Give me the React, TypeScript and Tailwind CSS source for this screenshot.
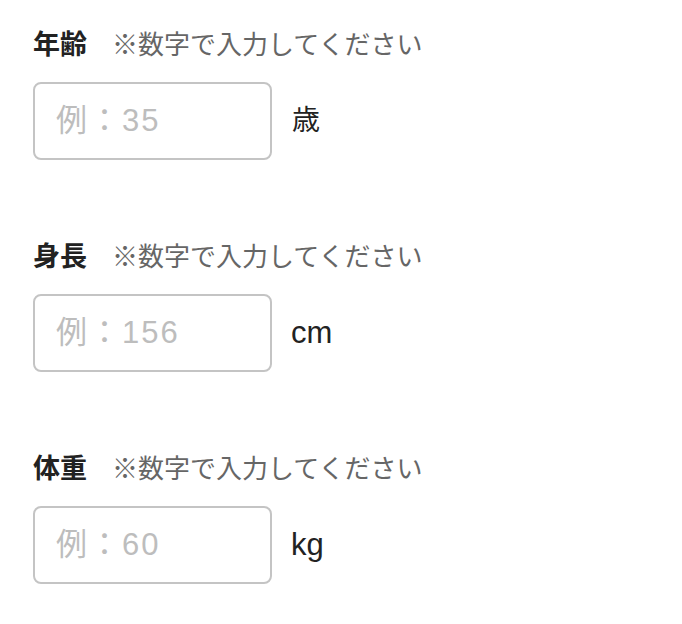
import React from "react";

const fields = [
  { label: "年齢", ph: "例：35", unit: "歳", unitCls: "ml-[20px] text-[28px] text-[#222]" },
  { label: "身長", ph: "例：156", unit: "cm", unitCls: "ml-[19px] text-[31px] text-[#222]" },
  { label: "体重", ph: "例：60", unit: "kg", unitCls: "ml-[19px] text-[31px] text-[#222]" },
];

export default function App() {
  return (
    <div
      className="w-[682px] h-[624px] bg-white pl-[33px] pt-[25px] flex flex-col gap-[77px]"
      style={{ fontFamily: '"Noto Sans CJK JP", "Noto Sans", sans-serif' }}
    >
      {fields.map((f) => (
        <div key={f.label} className="flex flex-col gap-[21px]">
          <div className="flex items-center h-[36px]">
            <span className="text-[27px] leading-[36px] font-bold text-[#222]">{f.label}</span>
            <span className="ml-[25px] text-[26px] leading-[36px] text-[#666]">※数字で入力してください</span>
          </div>
          <div className="flex items-center">
            <input
              className="w-[239px] h-[78px] border-2 border-[#c4c4c4] rounded-[8px] px-[21px] text-[31px] tracking-[2px] text-[#222] placeholder:text-[#bdbdbd] outline-none"
              style={{ fontFamily: '"Liberation Sans", "Noto Sans CJK JP", sans-serif' }}
              placeholder={f.ph}
            />
            <span
              className={f.unitCls}
              style={{ fontFamily: '"Liberation Sans", "Noto Sans CJK JP", sans-serif' }}
            >
              {f.unit}
            </span>
          </div>
        </div>
      ))}
    </div>
  );
}
